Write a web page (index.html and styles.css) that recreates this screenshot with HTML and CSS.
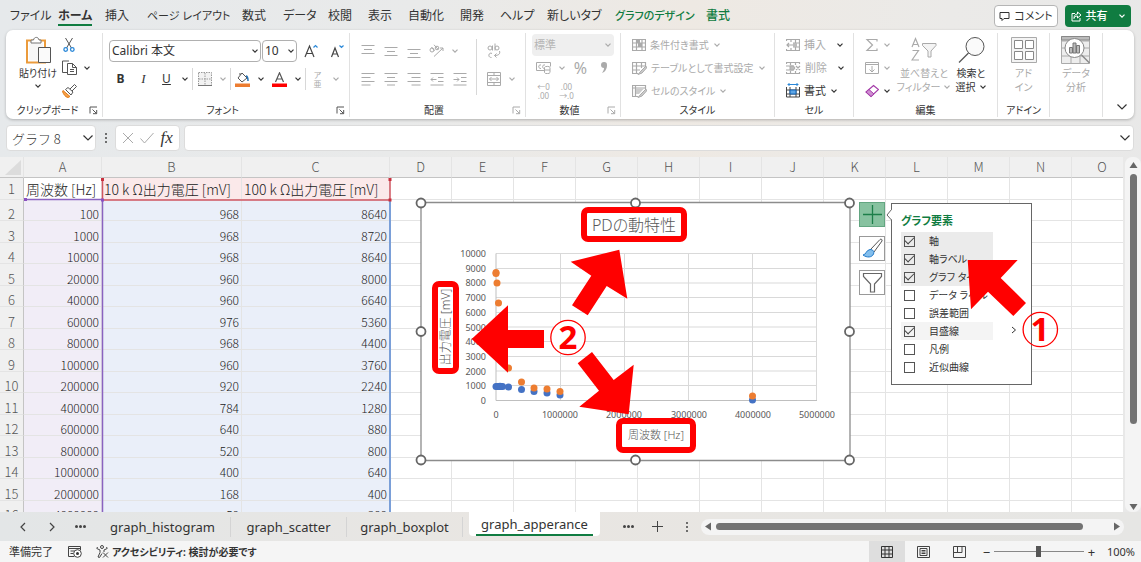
FILE: index.html
```html
<!DOCTYPE html>
<html lang="ja">
<head>
<meta charset="utf-8">
<title>graph_apperance</title>
<link rel="stylesheet" href="styles.css">
</head>
<body>
<svg class="sprite" aria-hidden="true">
  <symbol id="chev" viewBox="0 0 8 8"><path d="M1.5 2.7 4 5.2 6.5 2.7" fill="none" stroke="currentColor" stroke-width="1.2"/></symbol>
  <symbol id="chev-l" viewBox="0 0 12 12"><path d="M1.5 3.5 6 8l4.500-4.500" fill="none" stroke="currentColor" stroke-width="1.200"/></symbol>
  <symbol id="launch" viewBox="0 0 9 9"><path d="M1 7.500V1h7M3.500 3.500 7.500 7.500M7.700 4v3.700H4" fill="none" stroke="currentColor"/></symbol>
  <symbol id="tri-u" viewBox="0 0 9 9"><path d="M4.500 1 8.500 7h-8z" fill="currentColor"/></symbol>
  <symbol id="tri-d" viewBox="0 0 9 9"><path d="M4.500 8 .5 2h8z" fill="currentColor"/></symbol>
  <symbol id="tri-l" viewBox="0 0 9 9"><path d="M1 4.500 7 .5v8z" fill="currentColor"/></symbol>
  <symbol id="tri-r" viewBox="0 0 9 9"><path d="M8 4.500 2 .5v8z" fill="currentColor"/></symbol>
</svg>

<header class="topbar">
  <nav class="tabs">
    <button>ファイル</button><button class="on">ホーム</button><button>挿入</button><button class="long">ページ レイアウト</button><button>数式</button><button>データ</button><button>校閲</button><button>表示</button><button>自動化</button><button>開発</button><button>ヘルプ</button><button>新しいタブ</button><button class="ctx long">グラフのデザイン</button><button class="ctx">書式</button>
  </nav>
  <button class="comment"><svg width="11" height="11" viewBox="0 0 11 11"><path d="M1 1.500h9v6H5L3 9.500v-2H1z" fill="none" stroke="currentColor"/></svg>コメント</button>
  <button class="share"><svg width="11" height="11" viewBox="0 0 11 11"><path d="M4 2.500H1v7.500h8V7M6.500 1l3.500 3-3.500 3V5C4.500 5 3.500 6 3 7.500 3 5 4 3 6.500 3z" fill="none" stroke="currentColor"/></svg>共有<svg class="chev"><use href="#chev"/></svg></button>
</header>

<section class="ribbon">
  <div class="group clip">
    <div class="body">
      <button class="big paste" aria-label="貼り付け">
        <svg width="27" height="28" viewBox="0 0 27 28"><path d="M2 4.500h18v22H2z" fill="#fff" stroke="#eb9b3c" stroke-width="2"/><path d="M4 6.500h14v18H4z" fill="#f7f7f7"/><path d="M6 7V4h2.500C9 .5 13.500.5 14 4H16v3z" fill="#fff" stroke="#777"/><path d="M13.500 11.500h12v15h-12z" fill="#fafafa" stroke="#555"/></svg>
        <span>貼り付け</span><svg class="chev"><use href="#chev"/></svg>
      </button>
      <div class="stack">
        <button aria-label="切り取り"><svg width="14" height="14" viewBox="0 0 14 14"><path d="M3.500 0 9.500 10M10.500 0 4.500 10" stroke="#555" fill="none"/><circle cx="3.700" cy="11.500" r="1.800" fill="none" stroke="#2b88d8" stroke-width="1.300"/><circle cx="10.300" cy="11.500" r="1.800" fill="none" stroke="#2b88d8" stroke-width="1.300"/></svg></button>
        <button aria-label="コピー"><svg width="16" height="15" viewBox="0 0 16 15"><path d="M5 12.500H.5V1H7M5.500 3.500h5l4 4v7h-9zM10.500 3.500v4h4M8 9.500h4M8 11.500h4" fill="none" stroke="#555"/></svg><svg class="chev"><use href="#chev"/></svg></button>
        <button aria-label="書式のコピー"><svg width="15" height="14" viewBox="0 0 15 14"><path d="M1 6.500 8 12.500 6 13.500C3 13 1.500 10 .5 7.500z" fill="#f7a24a" stroke="#e07b1a"/><path d="M3.500 5.500 6 3.500l5 4.500-2 3zM8 5l4.500-4.500 2 2L10 7" fill="#fff" stroke="#555"/></svg></button>
      </div>
    </div>
    <div class="label"><span>クリップボード</span><svg class="launch"><use href="#launch"/></svg></div>
  </div>

  <div class="group font">
    <div class="body rows">
      <div class="row combos">
        <label class="combo name"><select aria-label="フォント名"><option>Calibri 本文</option></select><svg class="chev"><use href="#chev"/></svg></label>
        <label class="combo size"><select aria-label="フォント サイズ"><option>10</option></select><svg class="chev"><use href="#chev"/></svg></label>
        <button class="w25" aria-label="拡大"><svg width="14" height="14" viewBox="0 0 14 14"><path d="M1 13 5.500 2 10 13M2.500 9.500h6" fill="none" stroke="#444" stroke-width="1.200"/><path d="M9.500 3.500 11.500 1.500l2 2" fill="none" stroke="#2b88d8" stroke-width="1.200"/></svg></button>
        <button class="w25" aria-label="縮小"><svg width="14" height="14" viewBox="0 0 14 14"><path d="M1.500 13 5 4l3.500 9M2.800 10h4.500" fill="none" stroke="#444" stroke-width="1.200"/><path d="m9.500 1.500 2 2 2-2" fill="none" stroke="#2b88d8" stroke-width="1.200"/></svg></button>
      </div>
      <div class="row">
        <button class="w23"><b>B</b></button><button class="w23"><i class="ital">I</i></button><button class="w23"><u>U</u></button><button class="w14" aria-label="下線"><svg class="chev"><use href="#chev"/></svg></button>
        <span class="sep"></span>
        <button class="w23 off" aria-label="罫線"><svg width="14" height="14" viewBox="0 0 14 14"><path d="M.5.5h13v13H.5zM7 1v12M1 7h12" fill="#f2f2f2" stroke="#999" stroke-dasharray="1.500 1"/><path d="M0 13.500h14" stroke="#777"/></svg></button><button class="w14 off" aria-label="罫線の種類"><svg class="chev"><use href="#chev"/></svg></button>
        <span class="sep"></span>
        <button class="w23" aria-label="塗りつぶし"><svg width="15" height="15" viewBox="0 0 15 15"><path d="M7 1 12 6 7 10 3 6zM5 3v-2" fill="#fff" stroke="#555"/><path d="M11 4c2 0 2 2 2 5" fill="none" stroke="#1f6fb5" stroke-width="1.500"/><path d="M0 11.500h15v3.500H0z" fill="#ed7d31"/></svg></button><button class="w14" aria-label="塗りつぶしの色"><svg class="chev"><use href="#chev"/></svg></button>
        <button class="w23" aria-label="フォントの色"><svg width="15" height="15" viewBox="0 0 15 15"><path d="M3.500 10 7.500.8 11.500 10M5 7h5" fill="none" stroke="#555" stroke-width="1.200"/><path d="M0 11.500h15v3.500H0z" fill="#f00"/></svg></button><button class="w14" aria-label="色の選択"><svg class="chev"><use href="#chev"/></svg></button>
        <span class="sep"></span>
        <button class="w23 off ruby"><span>ア</span><span>亜</span></button><button class="w14 off" aria-label="ふりがな"><svg class="chev"><use href="#chev"/></svg></button>
      </div>
    </div>
    <div class="label"><span>フォント</span><svg class="launch"><use href="#launch"/></svg></div>
  </div>

  <div class="group align off">
    <div class="body">
      <div class="rows">
        <div class="row">
          <button class="w23" aria-label="上揃え"><svg width="14" height="14" viewBox="0 0 14 14"><path d="M.5 1.500h13M3 5.500h8M.5 9.500h13" stroke="currentColor"/></svg></button>
          <button class="w23" aria-label="上下中央"><svg width="14" height="14" viewBox="0 0 14 14"><path d="M.5 3.500h13M3 7.500h8M.5 11.500h13" stroke="currentColor"/></svg></button>
          <button class="w23" aria-label="下揃え"><svg width="14" height="14" viewBox="0 0 14 14"><path d="M.5 5.500h13M3 9.500h8M.5 13.500h13" stroke="currentColor"/></svg></button>
          <button class="w23" aria-label="方向"><svg width="15" height="14" viewBox="0 0 15 14"><g fill="none" stroke="currentColor"><circle cx="3" cy="6" r="2"/><path d="m2.500 3 3 4M5 .8l4 4.500"/><circle cx="8" cy="4" r="1.800"/><path d="M5 12.500 14 4M11 4h3v3"/></g></svg></button><button class="w14" aria-label="方向の選択"><svg class="chev"><use href="#chev"/></svg></button>
        </div>
        <div class="row">
          <button class="w23" aria-label="左揃え"><svg width="14" height="14" viewBox="0 0 14 14"><path d="M.5 1.500h13M.5 5.500h9M.5 9.500h13M.5 13h9" stroke="currentColor"/></svg></button>
          <button class="w23" aria-label="中央揃え"><svg width="14" height="14" viewBox="0 0 14 14"><path d="M.5 1.500h13M3 5.500h8M.5 9.500h13M3 13h8" stroke="currentColor"/></svg></button>
          <button class="w23" aria-label="右揃え"><svg width="14" height="14" viewBox="0 0 14 14"><path d="M.5 1.500h13M4.500 5.500h9M.5 9.500h13M4.500 13h9" stroke="currentColor"/></svg></button>
          <button class="w23" aria-label="インデント減"><svg width="14" height="14" viewBox="0 0 14 14"><path d="M.5 1.500h13M8 5.500h5.500M8 9.500h5.500M.5 13h13M1 7.500h5.500M3 5.500 1 7.500l2 2" fill="none" stroke="currentColor"/></svg></button>
          <button class="w23" aria-label="インデント増"><svg width="14" height="14" viewBox="0 0 14 14"><path d="M.5 1.500h13M8 5.500h5.500M8 9.500h5.500M.5 13h13M.5 7.500H6M4 5.500l2 2-2 2" fill="none" stroke="currentColor"/></svg></button>
        </div>
      </div>
      <span class="sep tall"></span>
      <div class="rows">
        <div class="row"><button class="w31 wrap" aria-label="折り返し"><svg width="14" height="16" viewBox="0 0 14 16"><g fill="none" stroke="currentColor"><circle cx="3" cy="5" r="2"/><path d="M5.500 2.500V7.500M8 .5v7"/><circle cx="10" cy="5" r="2"/><path d="M5 10.500c-3-2-5 4-.5 4M12.500 8c1 3-1 4.500-5 4.500M9.500 10.500l-2 2 2 2"/></g></svg></button></div>
        <div class="row"><button class="w31" aria-label="結合"><svg width="14" height="14" viewBox="0 0 14 14"><path d="M.5.5h13v13H.5zM.5 3.500h13M.5 10.500h13M7 .5v3M7 10.500v3M2.500 7h9M4.500 5l-2 2 2 2M9.500 5l2 2-2 2" fill="none" stroke="currentColor"/></svg></button><button class="w6" aria-label="結合の種類"><svg class="chev"><use href="#chev"/></svg></button></div>
      </div>
    </div>
    <div class="label"><span>配置</span><svg class="launch"><use href="#launch"/></svg></div>
  </div>

  <div class="group number off">
    <div class="body three">
      <label class="combo fmt"><select aria-label="表示形式" disabled><option>標準</option></select><svg class="chev"><use href="#chev"/></svg></label>
      <div class="row">
        <button class="w23" aria-label="通貨"><svg width="15" height="13" viewBox="0 0 15 13"><path d="M.5 1.500h14v4M8 9.500H.5v-8M5 4c-3-1-3 4 0 3.500M9 4C6 3 6 8 8.500 7.500" fill="none" stroke="currentColor"/><path d="M8.500 6.500c0-1.500 5.500-1.500 5.500 0v5c0 1.500-5.500 1.500-5.500 0zM8.500 9h5.500" fill="#fff" stroke="currentColor"/></svg></button><button class="w14" aria-label="通貨の種類"><svg class="chev"><use href="#chev"/></svg></button>
        <button class="w23 pct">%</button><button class="w23" aria-label="桁区切り"><svg width="8" height="13" viewBox="0 0 8 13"><path d="M4 1a3 3 0 0 1 3 3.200C7 8 5 11 2 12c1.500-2 2-3.500 2-5A3 3 0 0 1 4 1z" fill="currentColor"/></svg></button>
      </div>
      <div class="row">
        <button class="w23 dec"><span>←0</span><span>.00</span></button><button class="w23 dec"><span>.00</span><span>→.0</span></button>
      </div>
    </div>
    <div class="label"><span>数値</span><svg class="launch"><use href="#launch"/></svg></div>
  </div>

  <div class="group styles">
    <div class="body three off">
      <button class="item"><svg width="14" height="14" viewBox="0 0 14 14"><path d="M.5 1.500h13v11H.5zM4.500 1.500v11M10 1.500v11M.5 5h13M.5 9h13" fill="none" stroke="currentColor" stroke-width="1.200"/><path d="M4.500 1.500H8V5H4.500zM6 5h4v4H6z" fill="currentColor"/></svg>条件付き書式<svg class="chev"><use href="#chev"/></svg></button>
      <button class="item"><svg width="15" height="14" viewBox="0 0 15 14"><path d="M6 12.500H.5v-11h13V5M4.500 1.500v11M9.500 1.500V7M.5 5h13M.5 9H8" fill="none" stroke="currentColor" stroke-width="1.200"/><path d="m14 5-5 5-3 3.500 4-1.500L14.500 7z" fill="#ccc" stroke="currentColor"/></svg>テーブルとして書式設定<svg class="chev"><use href="#chev"/></svg></button>
      <button class="item"><svg width="15" height="14" viewBox="0 0 15 14"><path d="M6 12.500H.5v-11h13V5M.5 4h13M3.500 1.500v11" fill="none" stroke="currentColor" stroke-width="1.200"/><path d="M4 4.500h8L7 10H4z" fill="#ccc"/><path d="m14 5-5 5-3 3.500 4-1.500L14.500 7z" fill="#ccc" stroke="currentColor"/></svg>セルのスタイル<svg class="chev"><use href="#chev"/></svg></button>
    </div>
    <div class="label"><span>スタイル</span></div>
  </div>

  <div class="group cells">
    <div class="body three">
      <button class="item off"><svg width="14" height="14" viewBox="0 0 14 14"><path d="M.5 3V1.500h13v11H.5V11M5 1.500V4M9.500 1.500v11M5 10v2.500M7 5h6.500M7 9h6.500M.5 7H7M3 5 1 7l2 2" fill="none" stroke="currentColor" stroke-width="1.200"/><path d="M7 5h4v4H7z" fill="#bbb"/></svg>挿入<svg class="chev dark"><use href="#chev"/></svg></button>
      <button class="item off"><svg width="15" height="14" viewBox="0 0 15 14"><path d="M.5 3V1.500h13V3M.5 11v1.500h13V11M4.500 1.500V4M9.500 1.500V4M4.500 10v2.500M9.500 10v2.500M0 5h8M0 9h8M10 5l4 4M14 5l-4 4" fill="none" stroke="currentColor" stroke-width="1.200"/><path d="M4 5h3.500L9 7 7.500 9H4z" fill="#bbb" stroke="currentColor"/></svg>削除<svg class="chev dark"><use href="#chev"/></svg></button>
      <button class="item tight"><svg width="14" height="15" viewBox="0 0 14 15"><path d="M2 1.500h10M3.500 0 2 1.500 3.500 3M10.500 0 12 1.500 10.500 3" fill="none" stroke="#2b88d8"/><path d="M.5 4v10h13V4M4 4v10M10 4v10M.5 7h13M.5 11h13" fill="none" stroke="#444"/><path d="M4 7h6v4H4z" fill="#5ea6e6" stroke="#1565b5"/></svg>書式<svg class="chev"><use href="#chev"/></svg></button>
    </div>
    <div class="label"><span>セル</span></div>
  </div>

  <div class="group edit">
    <div class="body">
      <div class="three">
        <button class="item off" aria-label="合計"><svg width="14" height="14" viewBox="0 0 14 14"><path d="M12 3.500V1.500H2L7.500 7 2 12.500h10v-2" fill="none" stroke="currentColor" stroke-width="1.200"/></svg><svg class="chev"><use href="#chev"/></svg></button>
        <button class="item off" aria-label="フィル"><svg width="14" height="14" viewBox="0 0 14 14"><path d="M.5 1.500h13v11H.5zM.5 3.500h13M7 5v6M4.500 8.500 7 11l2.500-2.500" fill="none" stroke="currentColor"/></svg><svg class="chev"><use href="#chev"/></svg></button>
        <button class="item" aria-label="クリア"><svg width="14" height="14" viewBox="0 0 14 14"><path d="m8.500 1.500 5 4L6 12.500 1 8z" fill="#fff" stroke="#a43ba8" stroke-width="1.200"/><path d="M4 5.500 9 10l-3 2.500L1 8z" fill="#cf8fd2" stroke="#a43ba8"/></svg><svg class="chev"><use href="#chev"/></svg></button>
      </div>
      <button class="big off sort"><svg width="27" height="28" viewBox="0 0 27 28"><path d="M1 11 4.500 2.500 8 11M2 8.500h5M1.500 14.500h6L1 24h7" fill="none" stroke="currentColor" stroke-width="1.200"/><path d="M11.500 7.500H25v2L20 15v6h-3v-6l-5.500-5.500z" fill="#f4f4f4" stroke="currentColor"/></svg><span>並べ替えと<br>フィルター<svg class="chev"><use href="#chev"/></svg></span></button>
      <button class="big find"><svg width="27" height="28" viewBox="0 0 27 28"><circle cx="17" cy="10.500" r="9" fill="#fafafa" stroke="#555"/><path d="M10.500 17 1 26.500" stroke="#555" stroke-width="1.300"/></svg><span>検索と<br>選択<svg class="chev"><use href="#chev"/></svg></span></button>
    </div>
    <div class="label"><span>編集</span></div>
  </div>

  <div class="group addin">
    <div class="body">
      <button class="big off"><svg width="26" height="28" viewBox="0 0 26 28"><path d="M.5 1.500h25v25H.5z" fill="#f4f4f4" stroke="currentColor"/><path d="M3.500 4.500h8v8h-8zM14.500 4.500h8v8h-8zM3.500 15.500h8v8h-8zM14.500 15.500h8v8h-8z" fill="#fff" stroke="#888"/></svg><span>アド<br>イン</span></button>
    </div>
    <div class="label"><span>アドイン</span></div>
  </div>

  <div class="group data">
    <div class="body">
      <button class="big off"><svg width="30" height="28" viewBox="0 0 30 28"><path d="M.5.5h28v27H.5zM.5 5h28M.5 12h28M.5 20h28M10 20v7M19 20v7" fill="#ededed" stroke="currentColor"/><path d="M.5.5h28V4H.5z" fill="#bbb" stroke="#888"/><circle cx="13.500" cy="12" r="9.500" fill="#fff" stroke="#888"/><path d="M8.500 11.500h3V17h-3zM12 7h3v10h-3zM15.500 9.500h3V17h-3z" fill="#bbb" stroke="#777"/><path d="m20.500 19 8 8" stroke="#888" stroke-width="1.500"/></svg><span>データ<br>分析</span></button>
    </div>
  </div>
  <button class="collapse" aria-label="リボンを折りたたむ"><svg><use href="#chev-l"/></svg></button>
</section>

<section class="fbar">
  <label class="combo namebox"><select aria-label="名前ボックス"><option>グラフ 8</option></select><svg class="big-chev"><use href="#chev-l"/></svg></label>
  <span class="dots"><i></i><i></i><i></i></span>
  <div class="fx">
    <svg width="12" height="12" viewBox="0 0 12 12"><path d="m1 1 10 10M11 1 1 11" stroke="#aaa"/></svg>
    <svg width="14" height="12" viewBox="0 0 14 12"><path d="m.5 6.500 4 4.500L13.500 1" fill="none" stroke="#aaa"/></svg>
    <button>fx</button>
  </div>
  <label class="formula"><input aria-label="数式バー"><svg class="big-chev"><use href="#chev-l"/></svg></label>
</section>

<main class="workspace">
  <div class="canvas">
    <table class="sheet">
      <colgroup><col class="c-h"><col class="c-a"><col class="c-b"><col class="c-c"><col class="c-n"><col class="c-n"><col class="c-n"><col class="c-n"><col class="c-n"><col class="c-n"><col class="c-n"><col class="c-n"><col class="c-n"><col class="c-n"><col class="c-n"><col></colgroup>
      <thead><tr><th class="corner"><svg width="17" height="17" viewBox="0 0 17 17"><path d="M16 1v15H0z" fill="#dcdcdc"/></svg></th><th>A</th><th>B</th><th>C</th><th>D</th><th>E</th><th>F</th><th>G</th><th>H</th><th>I</th><th>J</th><th>K</th><th>L</th><th>M</th><th>N</th><th>O</th></tr></thead>
      <tbody>
        <tr class="heads"><th>1</th><td>周波数 [Hz]</td><td>10 k Ω出力電圧 [mV]</td><td>100 k Ω出力電圧 [mV]</td><td></td><td></td><td></td><td></td><td></td><td></td><td></td><td></td><td></td><td></td><td></td><td></td></tr>
        <tr><th>2</th><td>100</td><td>968</td><td>8640</td><td></td><td></td><td></td><td></td><td></td><td></td><td></td><td></td><td></td><td></td><td></td><td></td></tr>
        <tr><th>3</th><td>1000</td><td>968</td><td>8720</td><td></td><td></td><td></td><td></td><td></td><td></td><td></td><td></td><td></td><td></td><td></td><td></td></tr>
        <tr><th>4</th><td>10000</td><td>968</td><td>8640</td><td></td><td></td><td></td><td></td><td></td><td></td><td></td><td></td><td></td><td></td><td></td><td></td></tr>
        <tr><th>5</th><td>20000</td><td>960</td><td>8000</td><td></td><td></td><td></td><td></td><td></td><td></td><td></td><td></td><td></td><td></td><td></td><td></td></tr>
        <tr><th>6</th><td>40000</td><td>960</td><td>6640</td><td></td><td></td><td></td><td></td><td></td><td></td><td></td><td></td><td></td><td></td><td></td><td></td></tr>
        <tr><th>7</th><td>60000</td><td>976</td><td>5360</td><td></td><td></td><td></td><td></td><td></td><td></td><td></td><td></td><td></td><td></td><td></td><td></td></tr>
        <tr><th>8</th><td>80000</td><td>968</td><td>4400</td><td></td><td></td><td></td><td></td><td></td><td></td><td></td><td></td><td></td><td></td><td></td><td></td></tr>
        <tr><th>9</th><td>100000</td><td>960</td><td>3760</td><td></td><td></td><td></td><td></td><td></td><td></td><td></td><td></td><td></td><td></td><td></td><td></td></tr>
        <tr><th>10</th><td>200000</td><td>920</td><td>2240</td><td></td><td></td><td></td><td></td><td></td><td></td><td></td><td></td><td></td><td></td><td></td><td></td></tr>
        <tr><th>11</th><td>400000</td><td>784</td><td>1280</td><td></td><td></td><td></td><td></td><td></td><td></td><td></td><td></td><td></td><td></td><td></td><td></td></tr>
        <tr><th>12</th><td>600000</td><td>640</td><td>880</td><td></td><td></td><td></td><td></td><td></td><td></td><td></td><td></td><td></td><td></td><td></td><td></td></tr>
        <tr><th>13</th><td>800000</td><td>520</td><td>800</td><td></td><td></td><td></td><td></td><td></td><td></td><td></td><td></td><td></td><td></td><td></td><td></td></tr>
        <tr><th>14</th><td>1000000</td><td>400</td><td>640</td><td></td><td></td><td></td><td></td><td></td><td></td><td></td><td></td><td></td><td></td><td></td><td></td></tr>
        <tr><th>15</th><td>2000000</td><td>168</td><td>400</td><td></td><td></td><td></td><td></td><td></td><td></td><td></td><td></td><td></td><td></td><td></td><td></td></tr>
        <tr><th>16</th><td>4000000</td><td>50</td><td>300</td><td></td><td></td><td></td><td></td><td></td><td></td><td></td><td></td><td></td><td></td><td></td><td></td></tr>
      </tbody>
    </table>

    <svg class="ranges" width="370" height="336" viewBox="23 176 370 336">
      <path d="M24 199.500h78M102.500 200v312" stroke="#8a63c0" stroke-width="1.500"/>
      <path d="M390 200v312" stroke="#7a9fd8" stroke-width="2"/>
      <path d="M102.500 179v21H390v-21" fill="none" stroke="#d05560" stroke-width="1.500"/>
      <path d="M101 178h3v3h-3zM388.500 178h3v3h-3zM388.500 198.500h3v3h-3z" fill="#c8303e"/>
      <path d="M24 198h3v3h-3zM101 198.500h3v3h-3z" fill="#8a4fc0"/>
    </svg>

    <svg class="chart" width="444" height="272" viewBox="414 195 444 272">
      <path d="M421 202.500h429v258H421z" fill="#fff" stroke="#8c8c8c" stroke-width="1.300"/>
      <path d="M496 253.500h321M496 268.500h321M496 283h321M496 297.500h321M496 312.500h321M496 327h321M496 341.500h321M496 356.500h321M496 371h321M496 385.500h321M560.500 253.500v147M624.500 253.500v147M688.500 253.500v147M752.500 253.500v147M816.500 253.500v147" stroke="#d9d9d9"/>
      <path d="M496 253.500v147h321" fill="none" stroke="#bfbfbf"/>
      <g class="axis end">
        <text x="486" y="257">10000</text><text x="486" y="272">9000</text><text x="486" y="286">8000</text><text x="486" y="301">7000</text><text x="486" y="316">6000</text><text x="486" y="331">5000</text><text x="486" y="345">4000</text><text x="486" y="360">3000</text><text x="486" y="375">2000</text><text x="486" y="389">1000</text><text x="486" y="404">0</text>
      </g>
      <g class="axis mid">
        <text x="496" y="418">0</text><text x="560" y="418">1000000</text><text x="624" y="418">2000000</text><text x="689" y="418">3000000</text><text x="753" y="418">4000000</text><text x="817" y="418">5000000</text>
      </g>
      <g fill="#4472c4"><circle cx="496" cy="386.500" r="3.500"/><circle cx="497.300" cy="386.500" r="3.500"/><circle cx="498.600" cy="386.500" r="3.500"/><circle cx="500" cy="386.300" r="3.500"/><circle cx="501" cy="386.500" r="3.500"/><circle cx="502.500" cy="386.500" r="3.500"/><circle cx="508.500" cy="387" r="3.500"/><circle cx="521.500" cy="389.500" r="3.500"/><circle cx="534" cy="391.500" r="3.500"/><circle cx="547" cy="393" r="3.500"/><circle cx="560" cy="395" r="3.500"/><circle cx="624.500" cy="398" r="3.500"/><circle cx="752.500" cy="400" r="3.500"/></g>
      <g fill="#ed7d31"><circle cx="496" cy="273.500" r="3.500"/><circle cx="496" cy="272.500" r="3.500"/><circle cx="497" cy="283" r="3.500"/><circle cx="498.500" cy="303" r="3.500"/><circle cx="500" cy="322" r="3.500"/><circle cx="501" cy="336" r="3.500"/><circle cx="502.500" cy="345" r="3.500"/><circle cx="508.500" cy="368" r="3.500"/><circle cx="521.500" cy="382" r="3.500"/><circle cx="534" cy="388" r="3.500"/><circle cx="547" cy="389" r="3.500"/><circle cx="560" cy="391.500" r="3.500"/><circle cx="624.500" cy="395" r="3.500"/><circle cx="752.500" cy="396" r="3.500"/></g>
      <text class="title" x="634" y="231">PDの動特性</text>
      <text class="axis-title" x="656" y="439">周波数 [Hz]</text>
      <text class="axis-title vert" transform="translate(450 327) rotate(-90)">出力電圧 [mV]</text>
      <g fill="#fff" stroke="#666" stroke-width="1.800"><circle cx="421" cy="203" r="4.500"/><circle cx="635.500" cy="203" r="4.500"/><circle cx="849.500" cy="203" r="4.500"/><circle cx="421" cy="331.500" r="4.500"/><circle cx="849.500" cy="331.500" r="4.500"/><circle cx="421" cy="460" r="4.500"/><circle cx="635.500" cy="460" r="4.500"/><circle cx="849.500" cy="460" r="4.500"/></g>
    </svg>

    <div class="chart-tools">
      <button class="plus" aria-label="グラフ要素"><svg width="19" height="19" viewBox="0 0 19 19"><path d="M9.500 0v19M0 9.500h19" stroke="#1d7f4a" stroke-width="1.300"/></svg></button>
      <button aria-label="グラフ スタイル"><svg width="21" height="21" viewBox="0 0 21 21"><path d="M8.500 11.500 18 1.500c1-1 2.500 0 2 1.500L12 14" fill="#fff" stroke="#555"/><path d="M1 17c3 0 3-5 7-5.500 3 0 4.500 2 3.500 4.500C10 19.500 5 20 1 17z" fill="#83beec" stroke="#1f78c8"/></svg></button>
      <button aria-label="グラフ フィルター"><svg width="21" height="21" viewBox="0 0 21 21"><path d="M1.500 1.500h18V4.500L12.500 12v8h-4v-8L1.500 4.500z" fill="#fff" stroke="#666" stroke-width="1.200"/></svg></button>
    </div>

    <section class="flyout">
      <svg class="tip" width="6" height="14" viewBox="0 0 6 14"><path d="M6 0v1L1 7l5 5v2z" fill="#fff"/><path d="M5.500 0v1.500L1 7l4.500 5v2" fill="none" stroke="#666"/></svg>
      <h2>グラフ要素</h2>
      <label class="sel"><input type="checkbox" checked><span>軸</span></label>
      <label class="sel"><input type="checkbox" checked><span>軸ラベル</span></label>
      <label class="sel"><input type="checkbox" checked><span>グラフ タイトル</span></label>
      <label><input type="checkbox"><span>データ ラベル</span></label>
      <label><input type="checkbox"><span>誤差範囲</span></label>
      <label class="hover"><input type="checkbox" checked><span>目盛線</span></label>
      <label><input type="checkbox"><span>凡例</span></label>
      <label><input type="checkbox"><span>近似曲線</span></label>
      <svg class="more" width="6" height="8" viewBox="0 0 6 8"><path d="m1 1 3.500 3L1 7" fill="none" stroke="#333"/></svg>
    </section>

    <svg class="notes" width="632" height="254" viewBox="430 202 632 254">
      <g fill="none" stroke="#f00" stroke-width="6"><rect x="584" y="210" width="100" height="29" rx="4"/><rect x="435" y="284" width="21" height="87" rx="4"/><rect x="619" y="421" width="74" height="29" rx="4"/></g>
      <g fill="#f00">
        <path d="M619.300 249.700 627.300 298.700 606.700 286 587.700 315.300 572 305.300 591.300 275.700 570.700 261.700z"/>
        <path d="M471.700 339 508 305.300V330h36v18h-36v24.700z"/>
        <path d="M592 352 613.700 380 633.700 364.700 628.700 414.300 579.300 406.700 599 390.700 577.700 363.300z"/>
        <path d="M967.700 260h50l-17 18 25.300 25-12.700 13-25.300-24.300-17 17.600z"/>
      </g>
      <g fill="#fff" stroke="#f00" stroke-width="1.300"><circle cx="568" cy="337.500" r="17.200"/><circle cx="1040.300" cy="329.500" r="17.200" fill="none"/></g>
      <text class="num" x="568" y="349">2</text><text class="num" x="1040" y="341">1</text>
    </svg>
  </div>
  <div class="vscroll"><svg><use href="#tri-u"/></svg><span class="thumb"></span><span class="rest"></span><svg><use href="#tri-d"/></svg></div>
</main>

<nav class="sheetbar">
  <button class="w29" aria-label="前へ"><svg width="6" height="10" viewBox="0 0 6 10"><path d="M5 1 1 5l4 4" fill="none" stroke="#444" stroke-width="1.200"/></svg></button>
  <button class="w29" aria-label="次へ"><svg width="6" height="10" viewBox="0 0 6 10"><path d="m1 1 4 4-4 4" fill="none" stroke="#444" stroke-width="1.200"/></svg></button>
  <button class="w29" aria-label="シート一覧"><span class="dots flat"><i></i><i></i><i></i></span></button>
  <div class="sheets">
    <button>graph_histogram</button><button>graph_scatter</button><button>graph_boxplot</button><button class="on"><span>graph_apperance</span></button>
  </div>
  <div class="extra">
    <button class="w29" aria-label="その他のシート"><span class="dots flat"><i></i><i></i><i></i></span></button>
    <button class="w29" aria-label="新しいシート"><svg width="11" height="11" viewBox="0 0 11 11"><path d="M5.500 0v11M0 5.500h11" stroke="#444"/></svg></button>
    <span class="w29"><span class="dots"><i></i><i></i><i></i></span></span>
  </div>
  <div class="hscroll"><svg><use href="#tri-l"/></svg><span class="thumb"></span><span class="rest"></span><svg><use href="#tri-r"/></svg></div>
</nav>

<footer class="status">
  <span class="ready">準備完了</span>
  <svg width="14" height="13" viewBox="0 0 14 13"><path d="M6 11.500H.5v-10h12V5M.5 3.500h12M2.500 6h4M2.500 8.500h3" fill="none" stroke="#444"/><circle cx="9.500" cy="8.500" r="3.800" fill="#fff" stroke="#444"/><circle cx="9.500" cy="8.500" r="1.500" fill="#333"/></svg>
  <a class="a11y" href="#"><svg width="13" height="13" viewBox="0 0 13 13"><circle cx="6" cy="2" r="1.500" fill="none" stroke="#444"/><path d="M1.500 2 .8 3.500 4 5v2.500L2 12l1.500.5L6 8.500M10.500 2l.7 1.500L8 5v2M7 7.500l5 5M12 7.500l-5 5" fill="none" stroke="#444"/></svg>アクセシビリティ: 検討が必要です</a>
  <div class="views">
    <button class="on" aria-label="標準"><svg width="12" height="12" viewBox="0 0 12 12"><path d="M.5.5h11v11H.5zM4 0v12M8 0v12M0 4h12M0 8h12" fill="none" stroke="#333"/></svg></button>
    <button aria-label="ページ レイアウト"><svg width="13" height="12" viewBox="0 0 13 12"><path d="M.5.5h12v11H.5zM3 2.500h7v7H3zM4.500 4.500h4M4.500 6h4M4.500 7.500h4" fill="none" stroke="#444"/></svg></button>
    <button aria-label="改ページ プレビュー"><svg width="13" height="12" viewBox="0 0 13 12"><path d="M.5.5h12v11H.5zM4.500.5v6h4.500v-6M1 6.500h4" fill="none" stroke="#444"/></svg></button>
  </div>
  <div class="zoom"><button>−</button><input type="range" min="0" max="100" value="49" aria-label="ズーム"><button>+</button><span>100%</span></div>
</footer>
</body>
</html>
```
FILE: styles.css
```css
* { box-sizing: border-box; }
body {
  margin: 0;
  height: 100vh;
  display: flex;
  flex-direction: column;
  overflow: hidden;
  background: linear-gradient(95deg, #e6e9eb 0%, #e9eaea 35%, #eee9e3 58%, #ebeae8 80%, #e8e8e8 100%);
  color: #333;
  font: 11px/14px "Noto Sans", "Noto Sans CJK JP", sans-serif;
  font-feature-settings: "palt";
}
button, select, input { font: inherit; font-feature-settings: inherit; color: inherit; }
button { border: 0; padding: 0; margin: 0; background: none; white-space: nowrap; }
svg { display: block; flex: none; }
.sprite { width: 0; height: 0; position: absolute; }
.chev { width: 8px; height: 8px; }
.big-chev { width: 12px; height: 12px; }
.off { color: #aaa; }
.off .dark { color: #333; }

/* Tabs */
.topbar { display: flex; align-items: center; height: 30px; padding: 2px 10px 0; gap: 7px; }
.tabs {
  flex: 1;
  display: grid;
  grid-template-columns: 48px 47px 42px 95px 41px 45px 40px 40px 52px 40px 47px 68px 91px auto;
  justify-items: start;
  padding-top: 2px;
  font-size: 12px;
  line-height: 16px;
}
.tabs button { border-bottom: 2px solid transparent; }
.tabs .on { font-weight: 700; border-color: #107c41; }
.tabs .ctx { color: #107c41; font-weight: 500; }
.tabs .long { font-size: 11px; }
.comment, .share { display: flex; align-items: center; justify-content: center; gap: 4px; height: 22px; border-radius: 4px; }
.comment { width: 64px; background: #fff; border: 1px solid #b5b5b5; }
.share { width: 66px; background: #107c41; color: #fff; font-weight: 500; }
.share .chev { margin-left: 6px; }

/* Ribbon */
.ribbon {
  display: flex;
  margin: 0 7px 0 6px;
  height: 89px;
  background: #fff;
  border-radius: 7px;
  box-shadow: 0 1px 3px rgba(0, 0, 0, .25);
}
.group { display: flex; flex-direction: column; margin: 3px 0 2px; border-right: 1px solid #e1e1e1; }
.group .body { flex: 1; display: flex; }
.label { display: flex; align-items: center; height: 14px; color: #333; font-size: 10px; }
.label span { flex: 1; text-align: center; white-space: nowrap; }
.launch { width: 9px; height: 9px; margin-right: 4px; color: #555; }
.off .launch { color: #aaa; }
.clip { width: 97px; }
.font { width: 247px; padding-left: 6px; }
.align { width: 176px; padding-left: 6px; }
.number { width: 95px; padding-left: 6px; }
.styles { width: 154px; }
.cells { width: 79px; }
.edit { width: 144px; }
.addin { width: 52px; }
.data { width: 53px; }
.row, .group button { display: flex; align-items: center; }
.group button { justify-content: center; }
.group .big { flex-direction: column; justify-content: flex-start; padding-top: 3px; gap: 2px; font-size: 10px; }
.big span { text-align: center; }
.big span .chev { display: inline-block; margin-left: 3px; }
.group .paste { width: 56px; padding-left: 8px; font-size: 10px; }
.stack { display: grid; grid-template-rows: repeat(3, 23px); justify-items: start; align-content: start; }
.stack button { gap: 5px; }
.rows { display: grid; grid-template-rows: 28px 28px; align-content: start; padding-top: 4px; }
.group .body.rows { display: grid; }
.group .body.three, .three { display: grid; grid-template-rows: repeat(3, 23px); align-content: start; }
.w6 { width: 6px; }
.w14 { width: 14px; }
.w23 { width: 23px; }
.w25 { width: 25px; }
.w29 { width: 29px; }
.w31 { width: 31px; }
.sep { width: 1px; height: 22px; background: #d8d8d8; }
.sep.tall { height: 56px; margin: 6px 1px 0 5px; }
.combo { display: grid; align-items: center; }
.combo select { grid-area: 1 / 1; width: 100%; height: 22px; padding: 0 2px; appearance: none; border: 1px solid #b0b0b0; border-radius: 4px; background: #fff; font-size: 12px; opacity: 1; }
.combo svg { grid-area: 1 / 1; justify-self: end; margin-right: 2px; pointer-events: none; }
.combos { gap: 1px; }
.name { width: 152px; }
.size { width: 35px; }
.fmt { width: 82px; }
.fmt select { border: 0; background: #efefef; color: #b5b5b5; font-size: 11px; }
.font b, .font u { font-size: 12px; }
.ital { font: italic 13px "Liberation Serif", serif; }
.group .ruby { flex-direction: column; font-size: 8px; line-height: 9px; }
.pct { font-size: 16px; }
.group .dec { flex-direction: column; font-size: 8px; line-height: 9px; }
.group .item { justify-content: flex-start; gap: 4px; padding-left: 11px; }
.cells .item .chev { margin-left: 6px; }
.cells .tight .chev { margin-left: 0; }
.edit .item { padding-left: 11px; width: 44px; }
.sort { width: 52px; }
.find { width: 42px; }
.addin .big, .data .big { width: 100%; }
.styles .item { font-size: 10px; }
.collapse { flex: 1; display: flex; justify-content: center; align-items: flex-end; padding: 0 0 6px 6px; }
.collapse svg { width: 12px; height: 12px; }

/* Formula bar */
.fbar { display: flex; align-items: center; height: 38px; padding: 0 7px 0 6px; }
.namebox { width: 90px; }
.namebox select { height: 26px; padding-left: 5px; border-color: #dcdcdc; font: 300 13px "Noto Sans CJK JP", sans-serif; font-feature-settings: normal; }
.dots { display: flex; flex-direction: column; align-items: center; justify-content: center; gap: 2px; width: 19px; }
.dots i { width: 2px; height: 2px; border-radius: 1px; background: #444; }
.fx, .formula { display: flex; align-items: center; height: 26px; background: #fff; border: 1px solid #dcdcdc; border-radius: 4px; }
.fx { width: 65px; justify-content: space-evenly; margin-right: 4px; }
.fx button { font: italic 17px/20px "Liberation Serif", serif; }
.formula { flex: 1; padding-right: 2px; }
.formula input { flex: 1; border: 0; background: none; outline: 0; }

/* Worksheet */
.workspace { flex: 1; min-height: 0; display: flex; }
.canvas { position: relative; flex: 1; min-width: 0; overflow: hidden; background: #fff; }
.sheet { width: calc(100% + 10px); table-layout: fixed; border-collapse: separate; border-spacing: 0; font: 300 12px/12px "Noto Sans CJK JP", sans-serif; font-feature-settings: normal; }
.c-h { width: 24px; }
.c-a { width: 78px; }
.c-b { width: 140px; }
.c-c { width: 148px; }
.c-n { width: 62px; }
.sheet th, .sheet td { height: 21px; padding: 0 2px; border: 0 solid #e4e4e4; border-width: 0 1px 1px 0; white-space: nowrap; }
.sheet tbody tr:nth-child(odd) > * { height: 22px; }
.sheet th { background: #f0f0f0; color: #555; font-size: 13px; font-weight: 300; }
.sheet thead th { border-bottom-color: #c4c4c4; }
.sheet tbody th { border-right-color: #c4c4c4; vertical-align: bottom; }
.corner svg { margin-left: 3px; }
.sheet td { text-align: right; vertical-align: bottom; color: #222; }
.sheet td:nth-child(2) { background: #f1edf7; }
.sheet td:nth-child(3), .sheet td:nth-child(4) { background: #eaeff9; }
.sheet .heads > * { vertical-align: middle; }
.sheet .heads td { font-size: 14px; text-align: left; }
.sheet .heads td:nth-child(2) { background: #fff; }
.sheet .heads td:nth-child(3), .sheet .heads td:nth-child(4) { background: #fbe9ea; }
.ranges, .chart, .chart-tools, .flyout, .notes { position: absolute; }
.ranges { left: 23px; top: 19px; pointer-events: none; }
.chart { left: 414px; top: 38px; }
.chart text { fill: #595959; font-family: "Noto Sans", "Noto Sans CJK JP", sans-serif; }
.axis { font-size: 9px; }
.end { text-anchor: end; }
.mid, .title, .axis-title, .num { text-anchor: middle; }
.title { font-size: 16px; font-weight: 300; }
.axis-title { font-size: 11px; font-weight: 300; }
.vert { font-size: 12px; }
.chart-tools { left: 859px; top: 45px; display: grid; gap: 9px; }
.chart-tools button { display: grid; place-items: center; width: 26px; height: 25px; background: #fff; border: 1px solid #999; }
.chart-tools .plus { background: #87c2a0; border-color: #63a681; }
.flyout { left: 891px; top: 46px; width: 141px; padding: 8px 38px 8px 9px; background: #fff; border: 1px solid #666; }
.flyout h2 { margin: 0 0 3px; font-size: 11px; line-height: 17px; color: #107c41; white-space: nowrap; }
.flyout label { display: flex; align-items: center; gap: 14px; height: 18px; padding-left: 3px; font-size: 10px; white-space: nowrap; }
.flyout .sel { background: #ebebeb; }
.flyout .hover { background: #f4f4f4; }
.flyout input { appearance: none; display: grid; place-items: center; flex: none; width: 11px; height: 11px; margin: 0; border: 1px solid #555; }
.flyout input:checked::after { content: ""; width: 8px; height: 4px; margin-bottom: 3px; border: solid #444; border-width: 0 0 1px 1px; transform: rotate(-45deg); }
.tip { position: absolute; left: -6px; top: 4px; }
.more { position: absolute; left: 119px; top: 122px; }
.notes { left: 430px; top: 45px; pointer-events: none; }
.num { fill: #f00; font: 700 33px "Noto Sans", sans-serif; }
.vscroll { display: flex; flex-direction: column; align-items: center; gap: 4px; width: 16px; margin: 0 0 0 2px; padding: 4px 0 1px; border-radius: 7px; background: #f4f4f4; }
.vscroll svg, .hscroll svg { width: 9px; height: 9px; color: #666; }
.thumb { border-radius: 4px; background: #737373; }
.vscroll .thumb { width: 7px; flex: 252; }
.vscroll .rest { flex: 70; }

/* Sheet tabs */
.sheetbar { display: flex; align-items: center; height: 29px; padding-left: 8px; background: linear-gradient(90deg, #e3e6e7, #e9e6e2 45%, #e6e6e4); }
.sheetbar .w29 { display: flex; justify-content: center; }
.flat { flex-direction: row; gap: 1px; }
.flat i { width: 3px; height: 3px; border-radius: 2px; }
.sheets { display: flex; align-self: stretch; font: 13px/18px "Noto Sans", sans-serif; }
.sheets button { width: 116px; margin: 5px 0 4px; border-right: 1px solid #d4d4d4; }
.sheets button:first-child { width: 136px; }
.sheets .on { width: 131px; margin: 0 0 5px 6px; background: #fff; border: 0; border-radius: 0 0 4px 4px; }
.sheets .on span { border-bottom: 2px solid #107c41; padding: 0 5px 1px; }
.extra { display: flex; margin: 0 0 0 14px; }
.hscroll { flex: 1; display: flex; align-items: center; gap: 3px; height: 16px; margin: 0 17px 0 0; padding: 0 3px; border-radius: 8px; background: #f4f4f4; }
.hscroll .thumb { height: 7px; flex: 368; }
.hscroll .rest { flex: 23; }

/* Status bar */
.status { display: flex; align-items: center; height: 21px; padding: 0 6px 0 9px; background: #f5f5f5; }
.ready { width: 59px; }
.a11y { display: flex; align-items: center; flex: 1; gap: 3px; margin-left: 14px; color: #333; font-size: 10px; font-weight: 700; text-decoration: none; }
.views { display: flex; align-self: stretch; }
.views button { display: grid; place-items: center; width: 36px; }
.views .on { background: #dedede; }
.zoom { display: flex; align-items: center; margin-left: 2px; }
.zoom button { width: 15px; font-size: 13px; }
.zoom span { width: 36px; text-align: right; }
.zoom input { appearance: none; width: 90px; height: 10px; margin: 0; background: linear-gradient(#888, #888) center / 100% 1px no-repeat; }
.zoom input::-webkit-slider-thumb { appearance: none; width: 5px; height: 11px; background: #555; }
```
